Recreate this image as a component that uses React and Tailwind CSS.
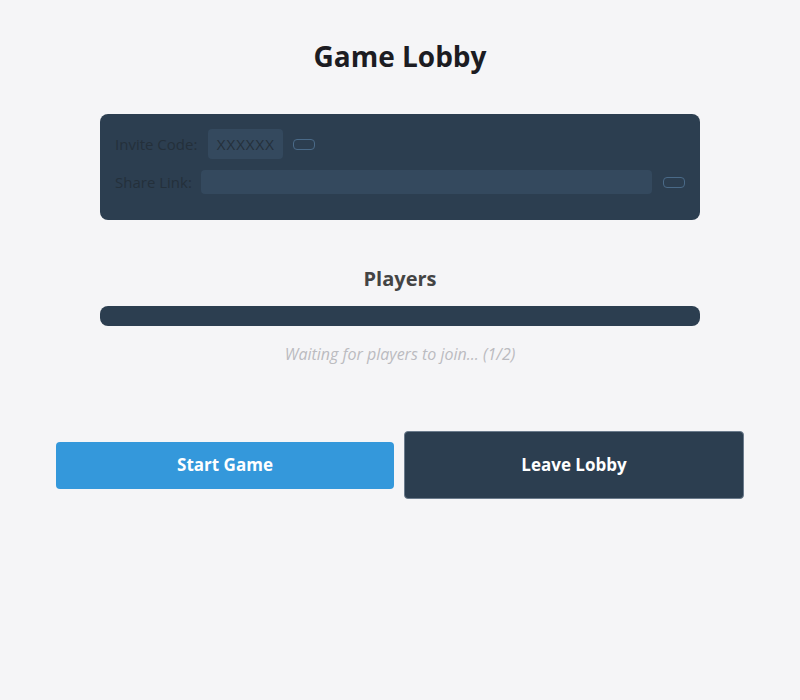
import React from 'react';

export default function App() {
  return (
    <div
      className="min-h-[700px] w-full bg-[#f5f5f7] px-[56px] pt-[36px]"
      style={{ fontFamily: '"Open Sans", "Noto Sans", sans-serif' }}
    >
      <h1 className="text-center text-[28px] font-bold leading-[40px] text-[#1c1c22]">
        Game Lobby
      </h1>

      <div className="mx-auto mt-[38px] w-[600px] rounded-lg bg-[#2c3e50] px-[15px] py-[15px]">
        <div className="mb-[10px] flex h-[30px] items-center">
          <span className="text-[15px] text-[#24303b]">Invite Code:</span>
          <span className="ml-[11px] flex h-[30px] w-[75px] items-center justify-center rounded bg-[#34495e] text-[15px] tracking-[1px] text-[#24303b]">
            XXXXXX
          </span>
          <button
            type="button"
            className="ml-[10px] h-[11px] w-[22px] rounded-[4px] border border-[#4a6a88]"
          />
        </div>
        <div className="mb-[10px] flex h-[26px] items-center">
          <span className="text-[15px] text-[#24303b]">Share Link:</span>
          <div className="ml-[9px] h-[24px] flex-1 rounded bg-[#34495e]" />
          <button
            type="button"
            className="ml-[11px] h-[11px] w-[22px] rounded-[4px] border border-[#4a6a88]"
          />
        </div>
      </div>

      <h2 className="mt-[44px] text-center text-[20px] font-bold leading-[30px] text-[#444]">
        Players
      </h2>
      <div className="mx-auto mt-[12px] h-[20px] w-[600px] rounded-lg bg-[#2c3e50]" />
      <p className="mt-[17px] text-center text-[16px] italic leading-[22px] text-[#bbbbc0]">
        Waiting for players to join... (1/2)
      </p>

      <div className="mt-[66px] flex items-center gap-[10px]">
        <button
          type="button"
          className="h-[47px] flex-1 rounded bg-[#3498db] text-[17px] font-bold text-white"
        >
          Start Game
        </button>
        <button
          type="button"
          className="h-[68px] flex-1 rounded border border-[#6b7b8c] bg-[#2c3e50] text-[17px] font-bold text-white"
        >
          Leave Lobby
        </button>
      </div>
    </div>
  );
}
